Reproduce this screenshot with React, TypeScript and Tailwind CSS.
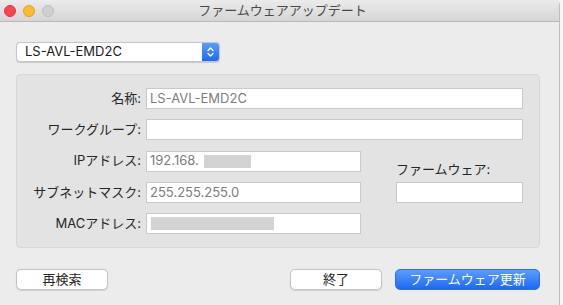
import React from "react";

const font = { fontFamily: 'Inter, "Noto Sans CJK JP", sans-serif' };

function Field({ value, children, className = "" }: { value?: string; children?: React.ReactNode; className?: string }) {
  return (
    <div className={`h-[21px] bg-white border border-[#c9c9c9] flex items-center pl-[3px] text-[13px] text-[#7d7d7d] ${className}`}>
      {value}
      {children}
    </div>
  );
}

function Label({ children }: { children: React.ReactNode }) {
  return <div className="h-[21px] flex items-center justify-end text-[13px] text-[#262626] pr-[5px]">{children}</div>;
}

export default function App() {
  return (
    <div className="w-[563px] h-[305px] bg-[#f6f6f6] overflow-hidden" style={font}>
      <div className="w-[560px] h-[305px] bg-[#ececec] border-r border-[#bdbdbd] flex flex-col rounded-tr-[5px] overflow-hidden">
        {/* title bar */}
        <div className="h-[22px] shrink-0 bg-gradient-to-b from-[#ebebeb] to-[#d5d5d5] border-b border-[#b8b8b8] flex items-center relative">
          <div className="flex items-center gap-[7px] pl-[4px]">
            <div className="w-[12px] h-[12px] rounded-full bg-[#fc4550] border border-[#e0343e]" />
            <div className="w-[12px] h-[12px] rounded-full bg-[#fdbb2d] border border-[#e0a21c]" />
            <div className="w-[12px] h-[12px] rounded-full bg-[#d0d0d0] border border-[#bdbdbd]" />
          </div>
          <div className="absolute inset-0 flex items-center justify-center text-[13px] text-[#4a4a4a] pl-[6px]">ファームウェアアップデート</div>
        </div>

        {/* popup */}
        <div className="pl-[16px] pt-[20px]">
          <div className="w-[204px] h-[20px] bg-white rounded-[4px] border border-[#c6c6c6] shadow-[0_0.5px_1px_rgba(0,0,0,0.15)] flex items-center justify-between overflow-hidden">
            <span className="pl-[8px] text-[13px] text-[#1a1a1a]">LS-AVL-EMD2C</span>
            <div className="w-[17px] h-full bg-gradient-to-b from-[#5c9bfb] to-[#2167f0] flex items-center justify-center">
              <svg width="9" height="12" viewBox="0 0 9 12" fill="none" stroke="white" strokeWidth="1.4" strokeLinecap="round" strokeLinejoin="round">
                <path d="M2 4.5 L4.5 2 L7 4.5" />
                <path d="M2 7.5 L4.5 10 L7 7.5" />
              </svg>
            </div>
          </div>
        </div>

        {/* group box */}
        <div className="mx-[16px] w-[524px] mt-[12px] bg-[#e3e3e3] border border-[#d7d7d7] rounded-[4px] pt-[13px] pb-[13px] pr-[16px] grid grid-cols-[129px_215px_35px_127px] gap-y-[10.3px]">
          <Label>名称:</Label>
          <Field className="col-span-3" value="LS-AVL-EMD2C" />

          <Label>ワークグループ:</Label>
          <Field className="col-span-3" />

          <Label>IPアドレス:</Label>
          <Field value="192.168.">
            <div className="ml-[5px] w-[47px] h-[13px] bg-[#d3d3d3]" />
          </Field>
          <div />
          <div className="row-span-2 flex flex-col justify-end gap-[3px]">
            <div className="h-[18px] flex items-center text-[13px] text-[#262626]">ファームウェア:</div>
            <Field />
          </div>

          <Label>サブネットマスク:</Label>
          <Field value="255.255.255.0" />
          <div />

          <Label>MACアドレス:</Label>
          <Field>
            <div className="ml-[1px] w-[123px] h-[13px] bg-[#d3d3d3]" />
          </Field>
        </div>

        {/* buttons */}
        <div className="flex items-center justify-between pl-[16px] pr-[19px] mt-[21px]">
          <button className="w-[92px] h-[21px] bg-white rounded-[5px] border border-[#c4c4c4] shadow-[0_0.5px_1px_rgba(0,0,0,0.12)] text-[13px] text-[#262626] flex items-center justify-center">再検索</button>
          <div className="flex items-center gap-[13px]">
            <button className="w-[92px] h-[21px] bg-white rounded-[5px] border border-[#c4c4c4] shadow-[0_0.5px_1px_rgba(0,0,0,0.12)] text-[13px] text-[#262626] flex items-center justify-center">終了</button>
            <button className="w-[145px] h-[21px] rounded-[5px] bg-gradient-to-b from-[#5b9cfc] to-[#1c69f1] border border-[#2a6fe8] text-[13px] text-white flex items-center justify-center">ファームウェア更新</button>
          </div>
        </div>
      </div>
    </div>
  );
}
